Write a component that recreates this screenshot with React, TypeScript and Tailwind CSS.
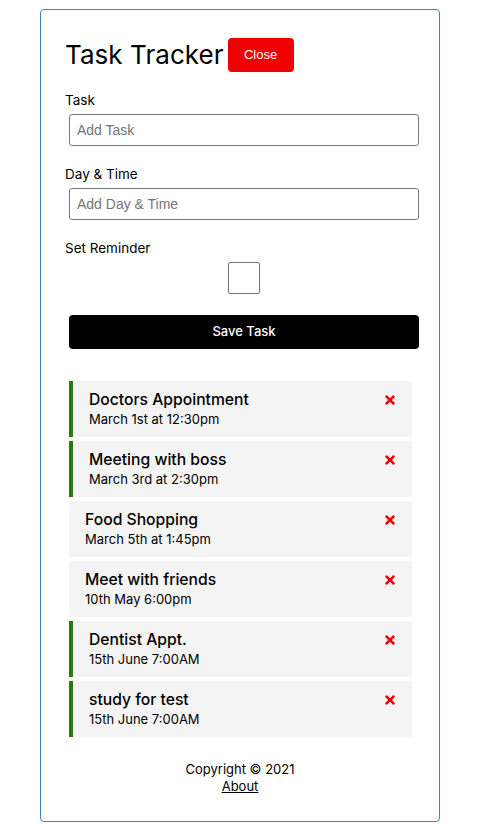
import { FaTimes } from "react-icons/fa";

type Task = { id: number; text: string; day: string; reminder: boolean };

const tasks: Task[] = [
  { id: 1, text: "Doctors Appointment", day: "March 1st at 12:30pm", reminder: true },
  { id: 2, text: "Meeting with boss", day: "March 3rd at 2:30pm", reminder: true },
  { id: 3, text: "Food Shopping", day: "March 5th at 1:45pm", reminder: false },
  { id: 4, text: "Meet with friends", day: "10th May 6:00pm", reminder: false },
  { id: 5, text: "Dentist Appt.", day: "15th June 7:00AM", reminder: true },
  { id: 6, text: "study for test", day: "15th June 7:00AM", reminder: true },
];

export default function App() {
  return (
    <div className="min-h-screen w-[482px] bg-white pt-[9px] font-['Inter',sans-serif] text-black">
      <div className="ml-[40px] h-[813px] w-[400px] rounded-[4px] border border-[#4682b4] px-[24px] pt-[28px]">
        {/* Header */}
        <header className="flex h-[34px] items-center">
          <h1 className="text-[26px] font-normal leading-none tracking-[0.05px]">Task Tracker</h1>
          <button className="ml-[4px] h-[34px] w-[66px] rounded-[4px] bg-[#f00000] font-['Liberation_Sans',Arial,sans-serif] text-[13px] text-white">
            Close
          </button>
        </header>

        {/* Add task form */}
        <form className="mt-[18px]">
          <div className="mb-[18px]">
            <label className="block h-[20px] text-[13.5px] leading-[20px]">Task</label>
            <input
              type="text"
              placeholder="Add Task"
              className="ml-[4px] mt-[4px] h-[32px] w-[350px] rounded-[3px] border border-[#767676] px-[7px] font-['Liberation_Sans',Arial,sans-serif] text-[14px] placeholder:text-[#757575]"
            />
          </div>
          <div className="mb-[18px]">
            <label className="block h-[20px] text-[13.5px] leading-[20px]">Day &amp; Time</label>
            <input
              type="text"
              placeholder="Add Day & Time"
              className="ml-[4px] mt-[4px] h-[32px] w-[350px] rounded-[3px] border border-[#767676] px-[7px] font-['Liberation_Sans',Arial,sans-serif] text-[14px] placeholder:text-[#757575]"
            />
          </div>
          <div>
            <label className="block h-[20px] text-[13.5px] leading-[20px]">Set Reminder</label>
            <div className="mt-[4px] flex justify-center pl-[8px]">
              <div className="h-[32px] w-[32px] rounded-[2px] border border-[#767676] bg-white" />
            </div>
          </div>
          <button
            type="button"
            className="ml-[4px] mt-[21px] h-[34px] w-[350px] rounded-[4px] bg-black text-[13px] font-medium text-white"
          >
            Save Task
          </button>
        </form>

        {/* Task list */}
        <div className="ml-[4px] mt-[32px] flex flex-col gap-[4px]">
          {tasks.map((t) => (
            <div
              key={t.id}
              className={`h-[56px] w-[343px] bg-[#f4f4f4] pl-[16px] pr-[15px] pt-[9px] ${t.reminder ? "border-l-4 border-[#2b7b0b]" : ""}`}
            >
              <div className="flex h-[20px] items-center justify-between">
                <h3 className="text-[15.7px] font-medium leading-[20px]">{t.text}</h3>
                <FaTimes className="h-[14px] w-[14px] text-[#f00000]" />
              </div>
              <p className="text-[13px] leading-[18px]">{t.day}</p>
            </div>
          ))}
        </div>

        {/* Footer */}
        <footer className="mt-[24px] text-center text-[13px] leading-[17px]">
          <p>Copyright © 2021</p>
          <a href="#" className="underline">
            About
          </a>
        </footer>
      </div>
    </div>
  );
}
